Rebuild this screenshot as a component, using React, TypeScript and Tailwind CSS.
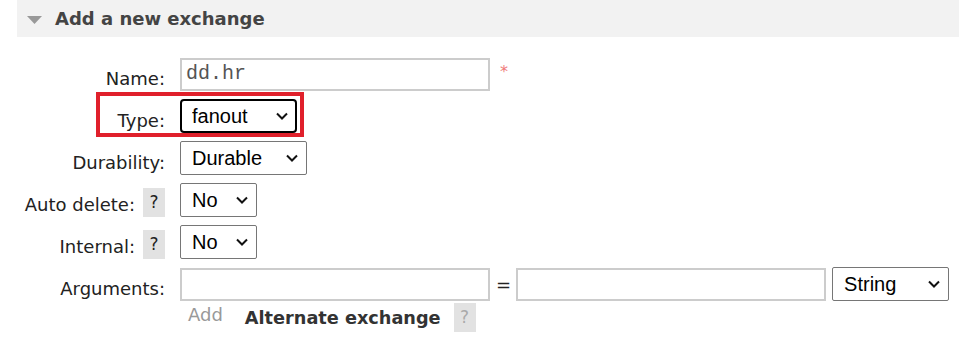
import { ReactNode } from "react"

const label_font = "font-['DejaVu_Sans',Verdana,sans-serif]"
const control_font = "font-['Liberation_Sans',Arial,sans-serif]"

function Chevron() {
  return (
    <svg
      width="12"
      height="8"
      viewBox="0 0 12 8"
      className="pointer-events-none absolute right-[9px] top-1/2 -translate-y-1/2"
    >
      <path d="M1 1.5 L6 6.5 L11 1.5" fill="none" stroke="#111" strokeWidth="2" />
    </svg>
  )
}

function Select({
  value,
  width,
  focused,
}: {
  value: string
  width: string
  focused?: boolean
}) {
  return (
    <div className={"relative h-[34px] " + width}>
      <select
        defaultValue={value}
        className={
          "h-full w-full appearance-none bg-white text-[20px] text-black outline-none " +
          control_font +
          (focused
            ? " rounded-[4px] border-2 border-black pl-[10px]"
            : " rounded-[2px] border border-[#767676] pl-[11px]")
        }
      >
        <option>{value}</option>
      </select>
      <Chevron />
    </div>
  )
}

function TextInput({ value, width }: { value?: string; width: string }) {
  return (
    <input
      defaultValue={value}
      className={
        "h-[33px] border-2 border-[#ccc] bg-white pb-[2px] pl-[4px] font-['Liberation_Mono','Courier_New',monospace] text-[20px] text-[#555] outline-none " +
        width
      }
    />
  )
}

function Help({ dim }: { dim?: boolean }) {
  return (
    <span
      className={
        "flex h-[29px] w-[22px] items-center justify-center bg-[#e2e2e2] text-[17px] " +
        (dim ? "text-[#aaa]" : "text-[#222]")
      }
    >
      ?
    </span>
  )
}

function Row({
  label,
  help,
  children,
  className,
}: {
  label: string
  help?: boolean
  children: ReactNode
  className?: string
}) {
  return (
    <div className={"relative flex h-[34px] items-end " + (className ?? "")}>
      <div className="flex w-[165px] shrink-0 items-end justify-end gap-[8px]">
        <span className="pb-[3px] leading-[18px]">{label}</span>
        {help && <Help />}
      </div>
      <div className="ml-[15px] flex items-center self-stretch">{children}</div>
    </div>
  )
}

export default function App() {
  return (
    <div className={"h-[342px] w-[959px] overflow-hidden bg-white text-[18px] text-[#222] " + label_font}>
      <div className="ml-[17px] flex h-[37px] items-center bg-[#f2f2f2]">
        <svg width="15" height="8" viewBox="0 0 15 8" className="ml-[10px] mt-[2px]">
          <path d="M0 0 L15 0 L7.5 8 Z" fill="#999" />
        </svg>
        <h2 className="ml-[13px] text-[18px] font-bold text-[#444]">Add a new exchange</h2>
      </div>

      <div className="mt-[20px] flex flex-col gap-[8px]">
        <Row label="Name:">
          <TextInput value="dd.hr" width="w-[310px]" />
          <span className="ml-[10px] self-start pt-[3px] text-[16px] text-[#f07a7a]">*</span>
        </Row>

        <Row label="Type:">
          <Select value="fanout" width="w-[117px]" focused />
          <div className="pointer-events-none absolute -top-[7px] left-[96px] h-[45px] w-[208px] border-4 border-[#e0202b]" />
        </Row>

        <Row label="Durability:">
          <Select value="Durable" width="w-[127px]" />
        </Row>

        <Row label="Auto delete:" help>
          <Select value="No" width="w-[77px]" />
        </Row>

        <Row label="Internal:" help>
          <Select value="No" width="w-[77px]" />
        </Row>

        <Row label="Arguments:">
          <TextInput width="w-[310px]" />
          <span className="ml-[6px] mr-[5px]">=</span>
          <TextInput width="w-[310px]" />
          <div className="ml-[6px]">
            <Select value="String" width="w-[117px]" />
          </div>
        </Row>
      </div>

      <div className="ml-[188px] mt-[2px] flex h-[29px] items-end">
        <span className="pb-[8px] leading-[18px] text-[#999]">Add</span>
        <span className="ml-[22px] pb-[5px] text-[17.7px] font-bold leading-[18px] text-[#333]">
          Alternate exchange
        </span>
        <span className="ml-[13px]">
          <Help dim />
        </span>
      </div>
    </div>
  )
}
